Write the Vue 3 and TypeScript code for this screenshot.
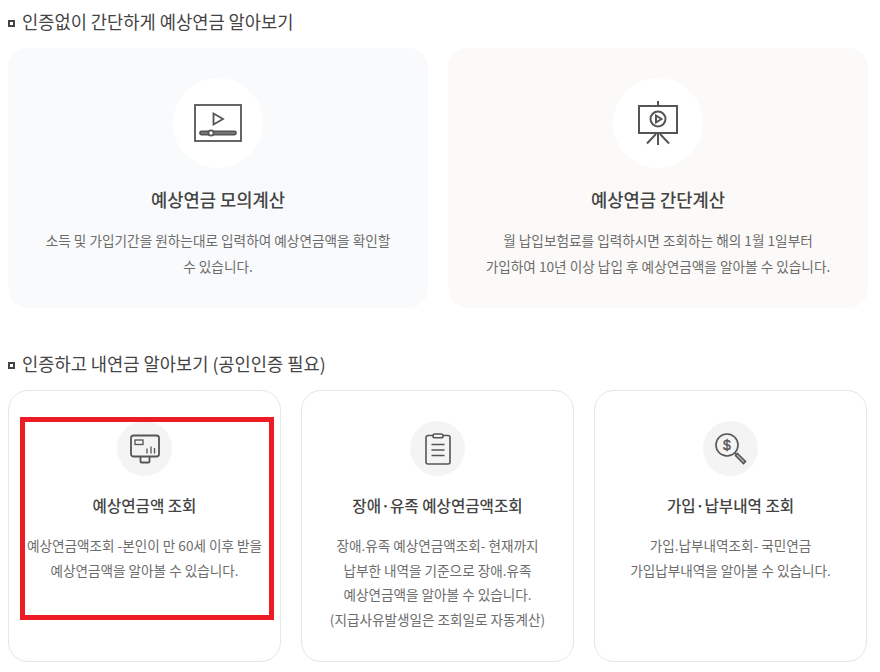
<script setup lang="ts">
const simpleCards = [
  {
    title: '예상연금 모의계산',
    lines: ['소득 및 가입기간을 원하는대로 입력하여 예상연금액을 확인할', '수 있습니다.'],
    tone: 'cool',
    icon: 'video'
  },
  {
    title: '예상연금 간단계산',
    lines: ['월 납입보험료를 입력하시면 조회하는 해의 1월 1일부터', '가입하여 10년 이상 납입 후 예상연금액을 알아볼 수 있습니다.'],
    tone: 'warm',
    icon: 'screen'
  }
]

const authCards = [
  {
    title: '예상연금액 조회',
    lines: ['예상연금액조회 -본인이 만 60세 이후 받을', '예상연금액을 알아볼 수 있습니다.'],
    icon: 'monitor',
    marked: true
  },
  {
    title: '장애·유족 예상연금액조회',
    lines: ['장애.유족 예상연금액조회- 현재까지', '납부한 내역을 기준으로 장애.유족', '예상연금액을 알아볼 수 있습니다.', '(지급사유발생일은 조회일로 자동계산)'],
    icon: 'clipboard',
    marked: false
  },
  {
    title: '가입·납부내역 조회',
    lines: ['가입.납부내역조회- 국민연금', '가입납부내역을 알아볼 수 있습니다.'],
    icon: 'search',
    marked: false
  }
]
</script>

<template>
  <div class="page">
    <h2 class="heading">인증없이 간단하게 예상연금 알아보기</h2>
    <div class="simple-row">
      <div v-for="card in simpleCards" :key="card.title" class="simple-card" :class="card.tone">
        <div class="big-circle">
          <svg v-if="card.icon === 'video'" width="48" height="38" viewBox="0 0 48 38" fill="none" stroke="#555" stroke-width="1.800">
            <rect x="1" y="1" width="46" height="36" />
            <path d="M19.500 9.500V20.500L29 15Z" />
            <rect x="6" y="27.500" width="36" height="3" rx="1.500" fill="#999" />
            <circle cx="17" cy="29" r="2.600" fill="#fff" />
          </svg>
          <svg v-else width="42" height="44" viewBox="0 0 42 44" fill="none" stroke="#555" stroke-width="2">
            <path d="M21 0V4" />
            <rect x="2" y="5" width="38" height="27" />
            <circle cx="21" cy="18" r="7.500" />
            <path d="M19 14.500V21.500L24.500 18Z" />
            <path d="M21 32V44M19 33L10 42.500M23 33L32 42.500" />
          </svg>
        </div>
        <h3 class="simple-title">{{ card.title }}</h3>
        <p class="simple-text">
          <span v-for="line in card.lines" :key="line">{{ line }}</span>
        </p>
      </div>
    </div>

    <h2 class="heading second">인증하고 내연금 알아보기 (공인인증 필요)</h2>
    <div class="auth-row">
      <div v-for="card in authCards" :key="card.title" class="auth-card">
        <div class="small-circle">
          <svg v-if="card.icon === 'monitor'" width="30" height="30" viewBox="0 0 30 30" fill="none" stroke="#555" stroke-width="1.300">
            <rect x="1" y="1.500" width="28" height="21" rx="2.500" stroke-width="1.800" />
            <rect x="5" y="6" width="8" height="4.500" />
            <path d="M17 19.500V14.500M21 19.500V12.500M24.500 19.500V14" />
            <path d="M10.500 23V27.500A1 1 0 0 0 11.500 28.500H18.500A1 1 0 0 0 19.500 27.500V23" stroke-width="1.800" />
          </svg>
          <svg v-else-if="card.icon === 'clipboard'" width="26" height="32" viewBox="0 0 26 32" fill="none" stroke="#555" stroke-width="1.600">
            <path d="M8 2.500H3A2 2 0 0 0 1 4.500V29A2 2 0 0 0 3 31H23A2 2 0 0 0 25 29V4.500A2 2 0 0 0 23 2.500H18" />
            <rect x="8" y="1" width="10" height="3.800" rx="1.900" />
            <path d="M6.500 11.500H19.500M6.500 17H19.500M6.500 22.500H19.500" />
          </svg>
          <svg v-else width="32" height="32" viewBox="0 0 32 32" fill="none" stroke="#555" stroke-width="1.600">
            <circle cx="12" cy="12" r="11" />
            <text x="12" y="17" text-anchor="middle" class="dollar">$</text>
            <path d="M20 20L22 22" />
            <path d="M22.500 20.500L30.500 28.500L28.500 30.500L20.500 22.500Z" fill="#bbb" />
          </svg>
        </div>
        <h3 class="auth-title">{{ card.title }}</h3>
        <p class="auth-text">
          <span v-for="line in card.lines" :key="line">{{ line }}</span>
        </p>
        <div v-if="card.marked" class="red-mark" />
      </div>
    </div>
  </div>
</template>

<style>
html,
body {
  background: #fff;
}
</style>

<style scoped>
.page {
  width: 880px;
  height: 672px;
  padding: 8px 12px 0 8px;
  box-sizing: border-box;
  overflow: hidden;
  font-family: "Noto Sans CJK KR", "Noto Sans", sans-serif;
  color: #444;
}
.heading {
  margin: 0;
  height: 28px;
  line-height: 28px;
  padding-left: 14px;
  font-size: 17.650px;
  font-weight: 400;
  position: relative;
}
.heading::before {
  content: "";
  position: absolute;
  left: 0;
  top: 12px;
  width: 3px;
  height: 3px;
  border: 2px solid #444;
}
.heading.second {
  margin-top: 42px;
}
.simple-row {
  display: flex;
  gap: 20px;
  margin-top: 12px;
}
.simple-card {
  flex: 0 0 420px;
  height: 260px;
  border-radius: 20px;
  display: flex;
  flex-direction: column;
  align-items: center;
  padding-top: 30px;
  box-sizing: border-box;
}
.cool {
  background: #f9fafc;
}
.warm {
  background: #fbfaf8;
}
.big-circle {
  width: 90px;
  height: 90px;
  border-radius: 50%;
  background: #fff;
  display: flex;
  align-items: center;
  justify-content: center;
}
.simple-title {
  margin: 19px 0 0;
  font-size: 17.700px;
  line-height: 24px;
  font-weight: 500;
}
.simple-text {
  margin: 16px 0 0;
  font-size: 13.650px;
  line-height: 26px;
  color: #6c6c6c;
  text-align: center;
}
.simple-text span,
.auth-text span {
  display: block;
}
.auth-row {
  display: flex;
  gap: 20px;
  margin-top: 12px;
}
.auth-card {
  position: relative;
  flex: 0 0 273px;
  height: 272px;
  box-sizing: border-box;
  border: 1px solid #e6e6e6;
  border-radius: 20px;
  display: flex;
  flex-direction: column;
  align-items: center;
  padding-top: 30px;
}
.small-circle {
  width: 55px;
  height: 55px;
  border-radius: 50%;
  background: #f4f4f4;
  display: flex;
  align-items: center;
  justify-content: center;
}
.auth-title {
  margin: 17px 0 0;
  font-size: 15.600px;
  line-height: 24px;
  font-weight: 500;
}
.auth-text {
  margin: 16px 0 0;
  font-size: 13.600px;
  line-height: 24.500px;
  color: #6c6c6c;
  text-align: center;
}
.dollar {
  font-family: "Liberation Sans", sans-serif;
  font-size: 14px;
  font-weight: 400;
  fill: #555;
  stroke: #555;
  stroke-width: 0.400;
}
.red-mark {
  position: absolute;
  left: 11px;
  top: 26px;
  width: 254px;
  height: 203px;
  box-sizing: border-box;
  border: 5px solid #ed1c24;
}
</style>
